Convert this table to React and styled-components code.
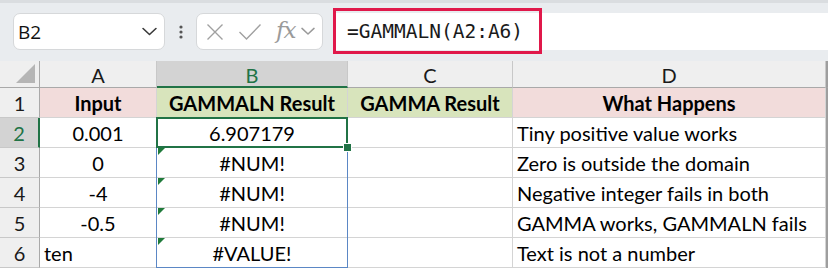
import React from "react";
import styled, { createGlobalStyle } from "styled-components";

const Global = createGlobalStyle`
  html, body { margin: 0; padding: 0; background: #ffffff; }
  body { width: 828px; height: 270px; overflow: hidden; }
`;

const COLS = [40, 117, 191, 165, 313];
const HEADER_H = 27;
const ROW_H = 30;

const Page = styled.div`
  width: 828px;
  height: 270px;
  background: #ffffff;
  display: flex;
  flex-direction: column;
  font-family: Lato, "Liberation Sans", sans-serif;
`;

const Toolbar = styled.div`
  height: 61px;
  box-sizing: border-box;
  background: #e9ecef;
  border-top: 3px solid #dadde0;
  display: flex;
  align-items: flex-start;
  padding: 10px 0 0 13px;
`;

const NameBox = styled.div`
  width: 152px;
  height: 37px;
  box-sizing: border-box;
  background: #ffffff;
  border: 1px solid #d6d8da;
  border-radius: 7px;
  display: flex;
  align-items: center;
  justify-content: space-between;
  padding: 0 7px 0 4px;
  font-family: "Open Sans", "Noto Sans", sans-serif;
  font-size: 19px;
  color: #111111;
`;

const Dots = styled.div`
  width: 31px;
  display: flex;
  justify-content: center;
  padding-top: 12px;
`;

const FxBox = styled.div`
  width: 127px;
  height: 37px;
  box-sizing: border-box;
  background: #ffffff;
  border: 1px solid #d6d8da;
  border-radius: 7px;
  display: flex;
  align-items: center;
  padding: 0 0 0 8px;
  color: #9c9c9c;
`;

const FxText = styled.span`
  font-family: "DejaVu Serif", "Liberation Serif", serif;
  font-style: italic;
  font-size: 23px;
  color: #9a9a9a;
  margin-left: 14px;
  letter-spacing: -1px;
  line-height: 1;
  padding-bottom: 3px;
`;

const FxChevron = styled.span`
  display: flex;
  margin-left: 6px;
`;

const FormulaArea = styled.div`
  flex: 1;
  margin-left: 10px;
  height: 37px;
  background: #ffffff;
  position: relative;
  display: flex;
  align-items: center;
`;

const FormulaText = styled.span`
  font-family: "DejaVu Sans Mono", "Liberation Mono", monospace;
  font-size: 19.5px;
  color: #1a1a1a;
  padding-left: 14px;
`;

const Highlight = styled.div`
  position: absolute;
  left: 0;
  top: -5px;
  width: 209px;
  height: 46px;
  box-sizing: border-box;
  border: 3px solid #e0184a;
  pointer-events: none;
`;

const Sheet = styled.div`
  position: relative;
  display: grid;
  grid-template-columns: ${COLS.map((c) => c + "px").join(" ")} 1fr;
  grid-template-rows: ${HEADER_H}px repeat(6, ${ROW_H}px);
  background: #ffffff;
`;

const ColHead = styled.div`
  box-sizing: border-box;
  background: ${(p) => (p.$sel ? "#d3d3d3" : "#efefef")};
  color: ${(p) => (p.$sel ? "#217346" : "#1a1a1a")};
  border-right: 1px solid #c8c8c8;
  border-bottom: ${(p) => (p.$sel ? "2px solid #217346" : "1px solid #a9a9a9")};
  display: flex;
  align-items: center;
  justify-content: center;
  font-size: 20px;
  padding-top: 2px;
`;

const Corner = styled.div`
  box-sizing: border-box;
  background: #efefef;
  border-right: 1px solid #a9a9a9;
  border-bottom: 1px solid #a9a9a9;
  position: relative;
`;

const CornerTri = styled.div`
  position: absolute;
  right: 4px;
  bottom: 4px;
  width: 0;
  height: 0;
  border-left: 19px solid transparent;
  border-bottom: 19px solid #b5b5b5;
`;

const Filler = styled.div`
  box-sizing: border-box;
  background: ${(p) => p.$bg || "#ffffff"};
  border-left: 2px solid #9e9e9e;
  border-bottom: ${(p) => (p.$head ? "1px solid #a9a9a9" : "none")};
`;

const RowHead = styled.div`
  box-sizing: border-box;
  background: ${(p) => (p.$sel ? "#d3d3d3" : "#efefef")};
  color: ${(p) => (p.$sel ? "#217346" : "#1a1a1a")};
  border-right: ${(p) => (p.$sel ? "2px solid #217346" : "1px solid #a9a9a9")};
  border-bottom: 1px solid #c8c8c8;
  display: flex;
  align-items: center;
  justify-content: center;
  font-size: 20px;
  padding-top: 1px;
`;

const Cell = styled.div`
  box-sizing: border-box;
  position: relative;
  background: ${(p) => p.$bg || "#ffffff"};
  border-right: 1px solid #d4d4d4;
  border-bottom: 1px solid #d4d4d4;
  display: flex;
  align-items: center;
  justify-content: ${(p) => (p.$align === "left" ? "flex-start" : "center")};
  padding: 1px 4px 0 4px;
  font-size: 20px;
  font-weight: ${(p) => (p.$bold ? 700 : 400)};
  color: #000000;
  white-space: nowrap;
`;

const ErrTri = styled.div`
  position: absolute;
  left: 1px;
  top: 0;
  width: 0;
  height: 0;
  border-top: 7px solid #1f7a3a;
  border-right: 7px solid transparent;
`;

const SpillBox = styled.div`
  position: absolute;
  box-sizing: border-box;
  border: 1.5px solid #5b87c5;
  pointer-events: none;
`;

const ActiveBox = styled.div`
  position: absolute;
  box-sizing: border-box;
  border: 2.5px solid #217346;
  pointer-events: none;
`;

const Handle = styled.div`
  position: absolute;
  width: 7px;
  height: 7px;
  background: #217346;
  border: 1px solid #ffffff;
  pointer-events: none;
`;

const PINK = "#f2dcdb";
const GREEN = "#d8e4bc";

const header = [
  { t: "Input", bg: PINK },
  { t: "GAMMALN Result", bg: GREEN },
  { t: "GAMMA Result", bg: GREEN },
  { t: "What Happens", bg: PINK },
];

const rows = [
  ["0.001", "6.907179", "", "Tiny positive value works", "center"],
  ["0", "#NUM!", "", "Zero is outside the domain", "center"],
  ["-4", "#NUM!", "", "Negative integer fails in both", "center"],
  ["-0.5", "#NUM!", "", "GAMMA works, GAMMALN fails", "center"],
  ["ten", "#VALUE!", "", "Text is not a number", "left"],
];

const Chevron = ({ size = 14, color = "#444" }) => (
  <svg width={size} height={size * 0.6} viewBox="0 0 14 8" fill="none">
    <path d="M1 1.2 L7 6.8 L13 1.2" stroke={color} strokeWidth="1.5" strokeLinecap="round" strokeLinejoin="round" />
  </svg>
);

export default function App() {
  const xB = COLS[0] + COLS[1];
  const wB = COLS[2];
  const y2 = HEADER_H + ROW_H;
  return (
    <Page>
      <Global />
      <Toolbar>
        <NameBox>
          <span>B2</span>
          <Chevron size={15} color="#3a3a3a" />
        </NameBox>
        <Dots>
          <svg width="4" height="14" viewBox="0 0 4 14">
            <circle cx="2" cy="2" r="1.6" fill="#555" />
            <circle cx="2" cy="7" r="1.6" fill="#555" />
            <circle cx="2" cy="12" r="1.6" fill="#555" />
          </svg>
        </Dots>
        <FxBox>
          <svg width="20" height="20" viewBox="0 0 20 20" fill="none">
            <path d="M2.5 2.5 L17.5 17.5 M17.5 2.5 L2.5 17.5" stroke="#a0a0a0" strokeWidth="1.4" />
          </svg>
          <svg width="24" height="18" viewBox="0 0 24 18" fill="none" style={{ marginLeft: 13 }}>
            <path d="M1.5 9 L8.5 16 L22.5 1.5" stroke="#a0a0a0" strokeWidth="1.4" />
          </svg>
          <FxText>fx</FxText>
          <FxChevron>
            <Chevron size={14} color="#9a9a9a" />
          </FxChevron>
        </FxBox>
        <FormulaArea>
          <Highlight />
          <FormulaText>=GAMMALN(A2:A6)</FormulaText>
        </FormulaArea>
      </Toolbar>
      <Sheet>
        <Corner>
          <CornerTri />
        </Corner>
        {["A", "B", "C", "D"].map((l) => (
          <ColHead key={l} $sel={l === "B"}>
            {l}
          </ColHead>
        ))}
        <Filler $bg="#efefef" $head />

        <RowHead>1</RowHead>
        {header.map((h) => (
          <Cell key={h.t} $bg={h.bg} $bold>
            {h.t}
          </Cell>
        ))}
        <Filler $bg={PINK} />

        {rows.map((r, i) => (
          <React.Fragment key={i}>
            <RowHead $sel={i === 0}>{i + 2}</RowHead>
            <Cell $align={r[4]}>{r[0]}</Cell>
            <Cell>
              {i > 0 && <ErrTri />}
              {r[1]}
            </Cell>
            <Cell>{r[2]}</Cell>
            <Cell $align="left">{r[3]}</Cell>
            <Filler />
          </React.Fragment>
        ))}

        <SpillBox style={{ left: xB - 1, top: y2 - 1, width: wB + 1, height: ROW_H * 5 + 1 }} />
        <ActiveBox style={{ left: xB - 1, top: y2 - 1, width: wB + 1, height: ROW_H + 1 }} />
        <Handle style={{ left: xB + wB - 5, top: y2 + ROW_H - 5 }} />
      </Sheet>
    </Page>
  );
}
